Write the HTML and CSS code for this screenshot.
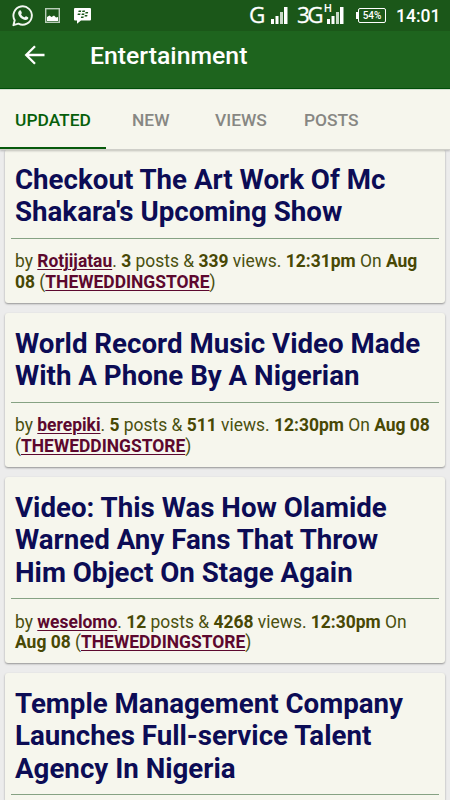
FILE: index.html
```
<!DOCTYPE html>
<html lang="en">
<head>
<meta charset="utf-8">
<title>Entertainment</title>
<link rel="stylesheet" href="styles.css">
</head>
<body>
<div class="statusbar">
  <svg class="notif" width="100" height="31" viewBox="0 0 100 31" aria-hidden="true">
    <path d="M13.400 25.200l1.300-5A9.200 9.200 0 1 1 18.400 23.700z" fill="none" stroke="#f2f7f1" stroke-width="1.900" stroke-linejoin="round"/>
    <path d="M19.300 10.800c.8-.7 1.500-.5 1.800.3l.7 1.700c.2.6-.9 1.300-.6 1.800.8 1.400 1.700 2.100 3.100 2.700.6.200 1.200-1.300 1.800-1l1.900.9c.6.300.3 1.500-.3 2.100-1.300 1.300-3.300.9-5.200-.2-1.900-1.100-3.200-2.600-4-4.300-.7-1.500-.3-3.200.8-4z" fill="#f2f7f1"/>
    <rect x="45.700" y="8.700" width="13.600" height="13.600" fill="none" stroke="#b9ceb9" stroke-width="1.400"/>
    <path d="M47 21v-4l2.500-1.500 2 1.500 2.500-1.500 2 2 2-.5V21z" fill="#fff"/>
    <path d="M75 8h15q1 0 1 1v10.500q0 1-1 1h-9L77 23.800v-3.300h-2q-1 0-1-1V9q0-1 1-1z" fill="#fff"/>
    <path d="M78.700 10.500h2.600l-.4 1.600h-2.600zM82.500 10.500h2.600l-.4 1.600h-2.600zM77.900 13.500h2.600l-.4 1.600h-2.600zM81.900 13.500h2.600l-.4 1.600h-2.600zM85.600 12h2.600l-.4 1.600h-2.600zM84.900 14.900h2.600l-.4 1.600h-2.600zM81.200 16.400h2.600l-.4 1.600h-2.600z" fill="#1b5719"/>
  </svg>
  <div class="system">
    <span class="net net-g">G</span>
    <svg class="bars" width="17" height="17" viewBox="0 0 17 17" aria-hidden="true"><path d="M0 12h3v5H0zM4.500 9h3v8h-3z" fill="#fff"/><path d="M9 5h3v12H9z" fill="#c9d9c8"/><path d="M13 0h3.500v17H13z" fill="#fff"/></svg>
    <span class="net net-3g">3G</span>
    <span class="signal"><span class="hsdpa">H</span><svg width="17" height="17" viewBox="0 0 17 17" aria-hidden="true"><path d="M0 12h3v5H0zM4.500 9h3v8h-3z" fill="#fff"/><path d="M9 5h3v12H9z" fill="#c9d9c8"/><path d="M13 0h3.500v17H13z" fill="#fff"/></svg></span>
    <span class="battery">54%</span>
    <span class="clock">14:01</span>
  </div>
</div>
<header class="appbar">
  <svg class="back" width="22" height="20" viewBox="0 0 22 20" aria-hidden="true"><path d="M20.500 10H2.500M11 1.200L2.200 10l8.800 8.800" fill="none" stroke="#fff" stroke-width="2.300"/></svg>
  <h1>Entertainment</h1>
</header>
<nav class="tabs">
  <a class="tab active">UPDATED</a>
  <a class="tab tab-new">NEW</a>
  <a class="tab tab-views">VIEWS</a>
  <a class="tab tab-posts">POSTS</a>
</nav>
<main class="feed">
  <article class="card first">
    <h2>Checkout The Art Work Of Mc<br>Shakara's Upcoming Show</h2>
    <p>by <a>Rotjijatau</a>. <b>3</b> posts &amp; <b>339</b> views. <b>12:31pm</b> On <b>Aug<br>08</b> (<a>THEWEDDINGSTORE</a>)</p>
  </article>
  <article class="card">
    <h2>World Record Music Video Made<br>With A Phone By A Nigerian</h2>
    <p>by <a>berepiki</a>. <b>5</b> posts &amp; <b>511</b> views. <b>12:30pm</b> On <b>Aug 08</b><br>(<a>THEWEDDINGSTORE</a>)</p>
  </article>
  <article class="card tall">
    <h2>Video: This Was How Olamide<br>Warned Any Fans That Throw<br>Him Object On Stage Again</h2>
    <p>by <a>weselomo</a>. <b>12</b> posts &amp; <b>4268</b> views. <b>12:30pm</b> On<br><b>Aug 08</b> (<a>THEWEDDINGSTORE</a>)</p>
  </article>
  <article class="card last">
    <h2>Temple Management Company<br>Launches Full-service Talent<br>Agency In Nigeria</h2>
  </article>
</main>
</body>
</html>
```

FILE: styles.css
```
* { box-sizing: border-box; }
body {
  margin: 0;
  width: 450px;
  height: 800px;
  overflow: hidden;
  display: flex;
  flex-direction: column;
  background: #ececec;
  font-family: Roboto, sans-serif;
}
.statusbar {
  flex: none;
  height: 31px;
  background: #1b5719;
  color: #fff;
  display: flex;
  justify-content: space-between;
}
.system { display: flex; height: 31px; width: 201px; align-items: center; white-space: nowrap; }
.net { font: 22.500px/31px "Open Sans", sans-serif; -webkit-text-stroke: .3px #fff; position: relative; top: -1px; }
.net-g { width: 22px; }
.net-3g { width: 30px; letter-spacing: -2.500px; }
.bars { margin-right: 9px; }
.signal { position: relative; display: flex; width: 17px; margin-right: 14px; }
.hsdpa { position: absolute; left: -3px; top: -4px; font: 500 11px/11px Roboto, sans-serif; }
.battery {
  position: relative;
  width: 28px;
  height: 15px;
  border: 1px solid #fff;
  border-radius: 2px;
  font: 500 10px/13px Roboto, sans-serif;
  text-align: center;
  margin-right: 10px;
}
.battery::before {
  content: "";
  position: absolute;
  left: -3px;
  top: 3px;
  width: 2px;
  height: 7px;
  background: #fff;
}
.clock { font-size: 17.500px; font-weight: 500; line-height: 31px; padding-top: 1px; }
.appbar {
  flex: none;
  height: 58px;
  background: #1e641e;
  border-bottom: 1px solid #00500a;
  color: #fff;
  display: flex;
  align-items: flex-start;
}
.back { margin: 14px 0 0 24px; }
h1 { margin: 11px 0 0 44px; font-size: 24.800px; line-height: 28px; font-weight: 500; white-space: nowrap; }
.tabs {
  flex: none;
  position: relative;
  z-index: 1;
  height: 61px;
  display: flex;
  background: #f6f6ed;
  border-top: 1px solid #d5dfd0;
  border-bottom: 1px solid #cfcfc9;
  box-shadow: 0 1px 2px rgba(0, 0, 0, .22);
  color: #878783;
  font-size: 17.400px;
  font-weight: 500;
  line-height: 61px;
}
.tab { white-space: nowrap; }
.active { width: 106px; padding-left: 15px; color: #065f0b; border-bottom: 2px solid #075a0c; }
.tab-new { margin-left: 26px; width: 83px; }
.tab-views { width: 89px; }
.feed { flex: 1; min-height: 0; padding: 0 5px; overflow: hidden; }
.card {
  height: 154px;
  margin-bottom: 10px;
  padding: 14.700px 6px 0;
  background: #f6f6ed;
  border-radius: 3px;
  box-shadow: 0 1px 2px rgba(0, 0, 0, .38);
}
.card.tall { height: 186px; }
.card.last { height: 127px; margin-bottom: 0; border-radius: 3px 3px 0 0; }
.card.first { margin-top: -1px; }
h2 {
  margin: 0;
  padding: 0 4px 9.200px;
  border-bottom: 1px solid #86a283;
  color: #0c0c55;
  font-size: 27.700px;
  line-height: 32.400px;
  font-weight: 700;
  white-space: nowrap;
}
p { margin: 0; padding: 12.600px 4px 0; color: #4a5010; font-size: 17.460px; line-height: 20.400px; white-space: nowrap; }
b { color: #484805; font-weight: 700; }
p a { color: #5c082e; font-weight: 700; text-decoration: underline; text-decoration-thickness: 1px; text-underline-offset: 2px; }
```
